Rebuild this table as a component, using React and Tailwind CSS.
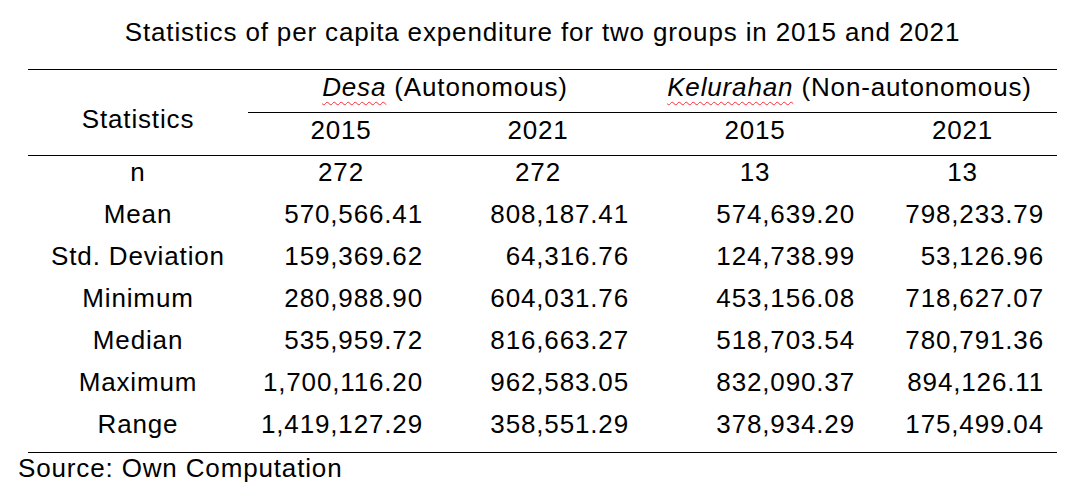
import React from "react";

const rows = [
  ["Mean", "570,566.41", "808,187.41", "574,639.20", "798,233.79"],
  ["Std. Deviation", "159,369.62", "64,316.76", "124,738.99", "53,126.96"],
  ["Minimum", "280,988.90", "604,031.76", "453,156.08", "718,627.07"],
  ["Median", "535,959.72", "816,663.27", "518,703.54", "780,791.36"],
  ["Maximum", "1,700,116.20", "962,583.05", "832,090.37", "894,126.11"],
  ["Range", "1,419,127.29", "358,551.29", "378,934.29", "175,499.04"],
];

const cols = "grid grid-cols-[220px_186px_208px_226px_189px]";
const squiggle =
  "italic underline decoration-wavy decoration-red-500 decoration-1 underline-offset-[5px]";

export default function App() {
  return (
    <div
      className="w-[1085px] h-[493px] bg-white text-black overflow-hidden tracking-[0.85px]"
      style={{ fontFamily: '"Liberation Sans", Arial, sans-serif' }}
    >
      {/* Caption */}
      <div className="h-[69px] pt-[17px] text-center text-[26px] leading-[30px]">
        Statistics of per capita expenditure for two groups in 2015 and 2021
      </div>

      <div className="ml-[28px] w-[1029px] text-[26px] leading-[28px]">
        {/* Header */}
        <div className={`${cols} border-t border-b border-black`}>
          <div className="row-span-2 flex items-center justify-center pt-[12px]">
            Statistics
          </div>
          <div className="col-span-2 h-[43px] pt-[3px] text-center border-b border-black">
            <span className={squiggle}>Desa</span> (Autonomous)
          </div>
          <div className="col-span-2 h-[43px] pt-[3px] text-center border-b border-black">
            <span className={squiggle}>Kelurahan</span> (Non-autonomous)
          </div>
          <div className="h-[42px] pt-[3px] text-center">2015</div>
          <div className="h-[42px] pt-[3px] text-center">2021</div>
          <div className="h-[42px] pt-[3px] text-center">2015</div>
          <div className="h-[42px] pt-[3px] text-center">2021</div>
        </div>

        {/* Body */}
        <div className="border-b border-black pb-[2px]">
          <div className={`${cols} h-[42px] pt-[2px] text-center`}>
            <div>n</div>
            <div>272</div>
            <div>272</div>
            <div>13</div>
            <div>13</div>
          </div>
          {rows.map((r) => (
            <div key={r[0]} className={`${cols} h-[42px] pt-[2px]`}>
              <div className="text-center">{r[0]}</div>
              <div className="text-right pr-[11px]">{r[1]}</div>
              <div className="text-right pr-[13px]">{r[2]}</div>
              <div className="text-right pr-[13px]">{r[3]}</div>
              <div className="text-right pr-[13px]">{r[4]}</div>
            </div>
          ))}
        </div>
      </div>

      <div className="pl-[18px] text-[26px] leading-[30px]">Source: Own Computation</div>
    </div>
  );
}
